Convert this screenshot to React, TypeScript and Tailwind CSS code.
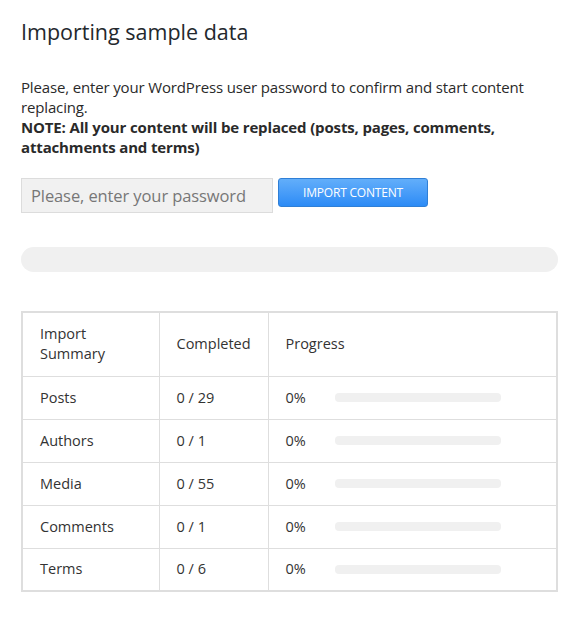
import React from "react";

const rows = [
  { name: "Posts", done: "0 / 29" },
  { name: "Authors", done: "0 / 1" },
  { name: "Media", done: "0 / 55" },
  { name: "Comments", done: "0 / 1" },
  { name: "Terms", done: "0 / 6" },
];

export default function App() {
  return (
    <div
      className="w-[585px] h-[617px] bg-white pl-[21px] pr-[27px] text-[#2a2a2a] text-[14px]"
      style={{ fontFamily: '"Open Sans", "Noto Sans", sans-serif' }}
    >
      <h1 className="pt-[17px] text-[21.5px] leading-[30px] text-[#23282d] font-normal">
        Importing sample data
      </h1>
      <div className="mt-[30px] leading-[20px] text-[15px] tracking-[-0.15px] pr-[10px]">
        <p>Please, enter your WordPress user password to confirm and start content replacing.</p>
        <p className="font-bold">
          NOTE: All your content will be replaced (posts, pages, comments, attachments and terms)
        </p>
      </div>
      <div className="mt-[21px] flex items-start gap-[5px]">
        <input
          type="password"
          placeholder="Please, enter your password"
          className="w-[252px] h-[35px] px-[9px] bg-[#f1f1f1] border border-[#dcdcdc] text-[16.5px] tracking-[-0.1px] placeholder:text-[#777] outline-none"
        />
        <button className="w-[150px] h-[29px] rounded-[3px] border border-[#2f7fd6] bg-gradient-to-b from-[#62aefa] to-[#2b8bf6] text-white text-[12px] tracking-[-0.2px] uppercase">
          Import content
        </button>
      </div>
      <div className="mt-[34px] h-[25px] rounded-full bg-[#f0f0f0]" />
      <table className="mt-[39px] w-[537px] border-2 border-[#dedede] border-collapse text-[14.5px] text-[#333]">
        <thead>
          <tr className="h-[64px]">
            <th className="w-[137px] border border-[#dedede] pl-[17px] text-left font-normal leading-[20px]">
              Import
              <br />
              Summary
            </th>
            <th className="w-[109px] border border-[#dedede] pl-[17px] text-left font-normal">
              Completed
            </th>
            <th className="border border-[#dedede] pl-[17px] text-left font-normal">Progress</th>
          </tr>
        </thead>
        <tbody>
          {rows.map((r) => (
            <tr key={r.name} className="h-[43px]">
              <td className="border border-[#dedede] pl-[17px]">{r.name}</td>
              <td className="border border-[#dedede] pl-[17px]">{r.done}</td>
              <td className="border border-[#dedede] pl-[17px]">
                <div className="flex items-center">
                  <span className="w-[49px]">0%</span>
                  <div className="w-[166px] h-[9px] rounded-[4px] bg-[#f0f0f0]" />
                </div>
              </td>
            </tr>
          ))}
        </tbody>
      </table>
    </div>
  );
}
